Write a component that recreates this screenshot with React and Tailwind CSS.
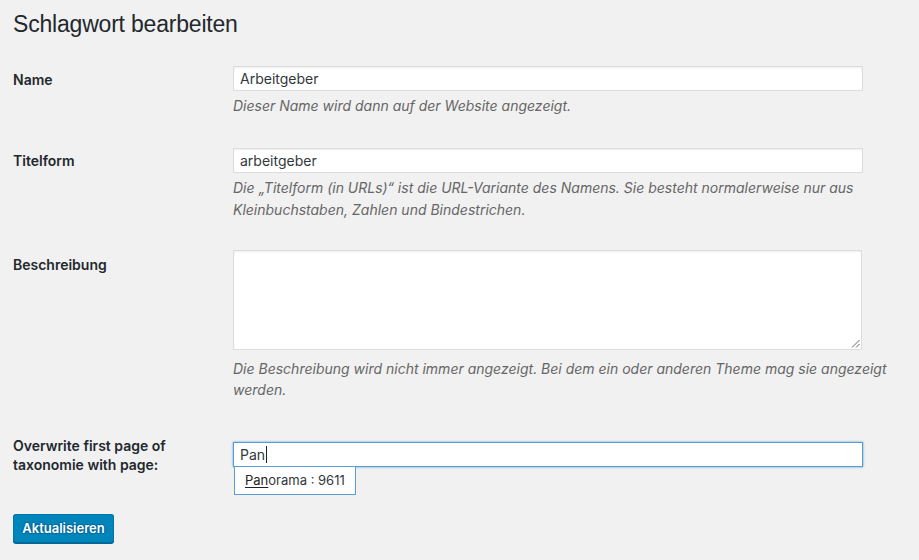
export default function App() {
  const font = { fontFamily: 'Inter, "Liberation Sans", Arial, sans-serif' };
  const titleFont = { fontFamily: '"Liberation Sans", Arial, sans-serif' };
  return (
    <div className="min-h-[560px] w-[919px] bg-[#f1f1f1] px-[13px] text-[#23282d]" style={font}>
      <h1 className="pt-[10px] text-[23px] leading-[29px] font-normal tracking-[-0.2px] text-[#23282d]" style={titleFont}>Schlagwort bearbeiten</h1>

      {/* Row 1 */}
      <div className="mt-[27px] flex">
        <div className="w-[220px] shrink-0 pt-[4px] text-[14px] leading-[20px] font-semibold">Name</div>
        <div className="w-[630px]">
          <div className="flex h-[25px] items-center border border-[#dddddd] bg-white px-[6px] text-[14px] text-[#32373c] shadow-[inset_0_1px_2px_rgba(0,0,0,0.07)]">
            Arbeitgeber
          </div>
          <p className="mt-[4px] text-[14px] leading-[21px] italic text-[#666666]">
            Dieser Name wird dann auf der Website angezeigt.
          </p>
        </div>
      </div>

      {/* Row 2 */}
      <div className="mt-[32px] flex">
        <div className="w-[220px] shrink-0 pt-[3px] text-[14px] leading-[20px] font-semibold">Titelform</div>
        <div className="w-[630px]">
          <div className="flex h-[25px] items-center border border-[#dddddd] bg-white px-[6px] text-[14px] text-[#32373c] shadow-[inset_0_1px_2px_rgba(0,0,0,0.07)]">
            arbeitgeber
          </div>
          <p className="mt-[4px] text-[14px] leading-[22px] italic text-[#666666]">
            Die „Titelform (in URLs)“ ist die URL-Variante des Namens. Sie besteht normalerweise nur aus Kleinbuchstaben, Zahlen und Bindestrichen.
          </p>
        </div>
      </div>

      {/* Row 3 */}
      <div className="mt-[29px] flex">
        <div className="w-[220px] shrink-0 pt-[5px] text-[14px] leading-[20px] font-semibold">Beschreibung</div>
        <div className="w-[670px]">
          <div className="relative h-[100px] w-[629px] border border-[#dddddd] bg-white shadow-[inset_0_1px_2px_rgba(0,0,0,0.07)]">
            <svg className="absolute right-[1px] bottom-[1px]" width="9" height="9" viewBox="0 0 9 9">
              <line x1="8.5" y1="1" x2="1" y2="8.5" stroke="#555" strokeWidth="0.9" />
              <line x1="8.5" y1="5" x2="5" y2="8.5" stroke="#555" strokeWidth="0.9" />
            </svg>
          </div>
          <p className="mt-[8px] text-[14px] leading-[21px] italic text-[#666666]">
            Die Beschreibung wird nicht immer angezeigt. Bei dem ein oder anderen Theme mag sie angezeigt werden.
          </p>
        </div>
      </div>

      {/* Row 4 */}
      <div className="mt-[36px] flex">
        <div className="w-[220px] shrink-0 text-[14px] leading-[19px] font-semibold">
          Overwrite first page of
          <br />
          taxonomie with page:
        </div>
        <div className="relative mt-[6px] w-[630px]">
          <div className="flex h-[25px] items-center border border-[#5b9dd9] bg-white px-[6px] text-[14px] text-[#32373c] shadow-[0_0_2px_rgba(30,140,190,0.8)]">
            Pan
            <span className="ml-[1px] inline-block h-[17px] w-[1px] bg-[#222]" />
          </div>
          <div className="absolute top-[25px] left-[1px] flex h-[28px] w-[122px] items-center border border-t-0 border-[#5b9dd9] bg-white pl-[10px] text-[13px] text-[#32373c]">
            <span className="text-[#222] underline decoration-[#222] underline-offset-[2px]">Pan</span>orama : 9611
          </div>
        </div>
      </div>

      <button className="mt-[40px] flex h-[29px] w-[101px] items-center justify-center rounded-[3px] border border-[#0073aa] border-b-[#006799] bg-[#0085ba] text-[13px] font-semibold text-white shadow-[0_1px_0_#006799] [text-shadow:0_-1px_1px_#006799,1px_0_1px_#006799,0_1px_1px_#006799,-1px_0_1px_#006799]">
        Aktualisieren
      </button>
    </div>
  );
}
